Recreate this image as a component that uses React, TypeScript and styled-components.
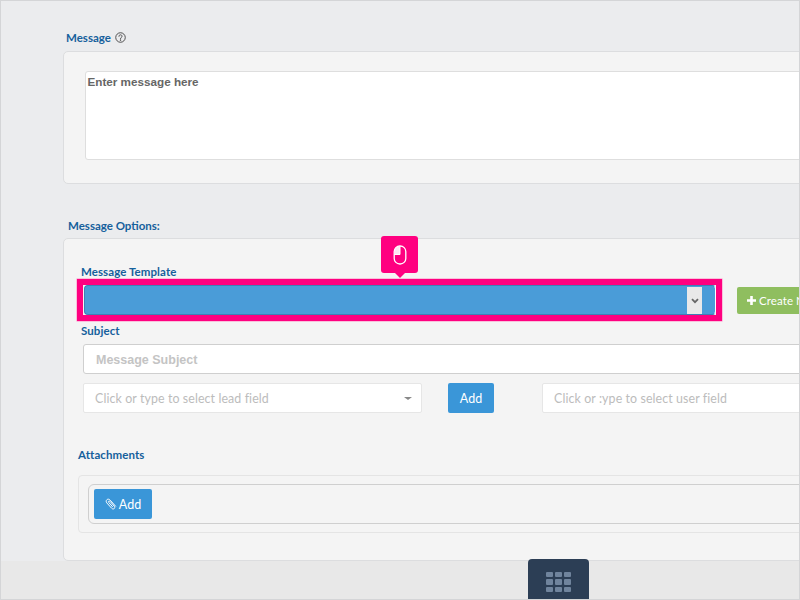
import React from "react";
import styled, { createGlobalStyle } from "styled-components";

const Global = createGlobalStyle`
  html, body { margin: 0; padding: 0; background: #ebecee; }
  body { font-family: "Lato", "Liberation Sans", sans-serif; }
`;

const Page = styled.div`
  position: relative;
  box-sizing: border-box;
  width: 800px;
  height: 600px;
  overflow: hidden;
  background: #ebecee;
  border: 1px solid #d4d5d7;
  display: flex;
  flex-direction: column;
`;

const Main = styled.div`
  width: 1100px;
  height: 560px;
  flex: none;
  box-sizing: border-box;
  padding: 29px 0 0 62px;
`;

const Heading = styled.div<{ $indent?: number }>`
  display: flex;
  align-items: center;
  gap: 4px;
  height: 15px;
  margin-left: ${(p) => p.$indent ?? 3}px;
  font: 700 11.5px/15px "Lato", "Noto Sans", sans-serif;
  color: #15609c;
`;

const Panel = styled.section<{ $h: number; $pad: string; $mt: number }>`
  box-sizing: border-box;
  height: ${(p) => p.$h}px;
  padding: ${(p) => p.$pad};
  margin-top: ${(p) => p.$mt}px;
  background: #f4f4f4;
  border: 1px solid #dcdddf;
  border-radius: 5px;
`;

const TextArea = styled.div`
  box-sizing: border-box;
  width: 900px;
  height: 89px;
  padding: 2px 1.5px;
  background: #fff;
  border: 1px solid #dedede;
  border-radius: 3px;
  font: 700 11.7px/15px "Liberation Sans", sans-serif;
  color: #666;
`;

const Spacer = styled.div<{ $h: number }>`
  height: ${(p) => p.$h}px;
`;

const FieldLabel = styled.div<{ $left: number; $top: number }>`
  height: 14px;
  margin: ${(p) => p.$top}px 0 0 ${(p) => p.$left}px;
  font: 700 11.5px/14px "Lato", "Noto Sans", sans-serif;
  letter-spacing: 0.08px;
  color: #15609c;
`;

const TemplateRow = styled.div`
  display: flex;
  align-items: center;
  gap: 21px;
  height: 30px;
  margin: 0 0 0 20px;
  padding-top: 6px;
`;

const Highlighted = styled.div`
  position: relative;
  flex: none;
  width: 632px;
  height: 30px;
`;

const Select = styled.div`
  box-sizing: border-box;
  width: 632px;
  height: 30px;
  display: flex;
  justify-content: flex-end;
  padding: 1px 13px 0 0;
  background: #4a9cd8;
  border: 1px solid #3e7fb5;
  border-right-color: #fff;
  border-radius: 4px;
`;

const SelectArrow = styled.div`
  width: 15px;
  height: 27px;
  display: flex;
  align-items: center;
  justify-content: center;
  background: #e9e9e9;
`;

const HighlightFrame = styled.div`
  position: absolute;
  left: -7px;
  top: -6px;
  width: 645px;
  height: 42px;
  box-sizing: border-box;
  border: 6px solid #ff0080;
  box-shadow: 0 0 0 0.5px #ff8cc4;
`;

const Tip = styled.div`
  position: absolute;
  left: 297px;
  top: -49px;
  width: 37px;
  height: 37px;
  display: flex;
  align-items: center;
  justify-content: center;
  background: #ff0080;
  border-radius: 3px;
  &::after {
    content: "";
    position: absolute;
    left: 14px;
    bottom: -5px;
    border-left: 5px solid transparent;
    border-right: 5px solid transparent;
    border-top: 5px solid #ff0080;
  }
`;

const GreenButton = styled.div`
  flex: none;
  width: 120px;
  height: 27px;
  box-sizing: border-box;
  padding-left: 10px;
  display: flex;
  align-items: center;
  gap: 3px;
  background: #8fbe5f;
  border-radius: 2px;
  color: #fff;
  font-size: 11.5px;
  letter-spacing: 0.1px;
`;

const SubjectInput = styled.div`
  box-sizing: border-box;
  width: 900px;
  height: 30px;
  margin: 6px 0 0 19px;
  padding: 1px 0 0 12px;
  display: flex;
  align-items: center;
  background: #fff;
  border: 1px solid #cfcfcf;
  border-radius: 3px;
  font: 700 12.5px "Liberation Sans", sans-serif;
  color: #c4c4c4;
`;

const FieldRow = styled.div`
  display: flex;
  align-items: center;
  height: 30px;
  margin: 9px 0 0 19px;
`;

const LookupBox = styled.div<{ $w: number; $before?: number; $after?: number }>`
  flex: none;
  position: relative;
  box-sizing: border-box;
  width: ${(p) => p.$w}px;
  height: 30px;
  margin-left: ${(p) => p.$before ?? 0}px;
  margin-right: ${(p) => p.$after ?? 0}px;
  padding-left: 11px;
  display: flex;
  align-items: center;
  background: #fff;
  border: 1px solid #e6e6e6;
  border-radius: 2px;
  font-size: 12.4px;
  letter-spacing: 0.1px;
  color: #bcbcbc;
`;

const Caret = styled.span`
  position: absolute;
  right: 9px;
  top: 13px;
  border-left: 4px solid transparent;
  border-right: 4px solid transparent;
  border-top: 3px solid #888;
`;

const BlueButton = styled.div<{ $w: number }>`
  flex: none;
  box-sizing: border-box;
  width: ${(p) => p.$w}px;
  height: 30px;
  display: flex;
  align-items: center;
  justify-content: center;
  gap: 2px;
  background: #3a96d8;
  border-radius: 2px;
  color: #fff;
  font-size: 12.5px;
`;

const AttachOuter = styled.div`
  box-sizing: border-box;
  width: 900px;
  height: 58px;
  margin: 13px 0 0 14px;
  padding: 8px 9px;
  border: 1px solid #e4e4e4;
  border-radius: 4px;
`;

const AttachInner = styled.div`
  box-sizing: border-box;
  height: 40px;
  padding: 4px 5px;
  border: 1px solid #cfcfcf;
  border-radius: 6px;
`;

const Footer = styled.div`
  flex: 1;
  background: #e8e8e8;
`;

const Dock = styled.div`
  position: absolute;
  left: 527px;
  top: 558px;
  box-sizing: border-box;
  width: 61px;
  height: 42px;
  padding-top: 13px;
  display: flex;
  justify-content: center;
  background: #2c3e55;
  border-radius: 4px 4px 0 0;
`;

const DockGrid = styled.div`
  display: grid;
  grid-template-columns: repeat(3, 7px);
  grid-auto-rows: 5.4px;
  gap: 2px 2px;
  & > span {
    background: #70849d;
    border-radius: 1px;
  }
`;

const HelpIcon = () => (
  <svg width="11" height="11" viewBox="0 0 12 12" fill="none" stroke="#444" strokeWidth="1">
    <circle cx="6" cy="6" r="5.2" />
    <path d="M4.3 4.7c0-1 .8-1.6 1.7-1.6s1.7.6 1.7 1.5c0 1.3-1.7 1.3-1.7 2.6" strokeLinecap="round" />
    <circle cx="6" cy="8.8" r="0.4" fill="#444" />
  </svg>
);

const Mouse = () => (
  <svg width="14" height="20" viewBox="0 0 14 20" fill="none">
    <path d="M7 1.5h-1a4.5 4.5 0 0 0-4.5 4.5v3.5h5.5z" fill="#fff" opacity="0.9" />
    <rect x="1.2" y="1" width="11.6" height="18" rx="5.6" stroke="#fff" strokeWidth="1.3" />
    <path d="M7 1v8.5H1.2" stroke="#fff" strokeWidth="1" />
  </svg>
);

const Chevron = () => (
  <svg width="8" height="6" viewBox="0 0 8 6" fill="none" stroke="#666" strokeWidth="1.8">
    <path d="M1 1.2l3 3 3-3" />
  </svg>
);

const Plus = () => (
  <svg width="9" height="9" viewBox="0 0 9 9" fill="#fff">
    <path d="M3.2 0h2.6v3.2H9v2.6H5.8V9H3.2V5.8H0V3.2h3.2z" />
  </svg>
);

const Clip = () => (
  <svg width="12" height="12" viewBox="0 0 12 12" fill="none" stroke="#fff" strokeWidth="1" strokeLinecap="round">
    <path d="M10.6 8.2 5.2 2.2C4.2 1 2.8.9 1.9 1.7.9 2.6 1 4 2 5.1l4.6 5.1c.8.9 1.9 1 2.6.4.8-.7.7-1.7-.1-2.6L5 3.4c-.4-.5-1-.5-1.3-.2-.4.3-.3.9.1 1.3l3.7 4.1" />
  </svg>
);

export default function App() {
  return (
    <>
      <Global />
      <Page>
        <Main>
          <Heading>
            Message <HelpIcon />
          </Heading>
          <Panel $h={133} $pad="19px 0 0 21px" $mt={6}>
            <TextArea>Enter message here</TextArea>
          </Panel>
          <Spacer $h={34} />
          <Heading $indent={5}>Message Options:</Heading>
          <Panel $h={323} $pad="0" $mt={5}>
            <FieldLabel $left={17} $top={26}>Message Template</FieldLabel>
            <TemplateRow>
              <Highlighted>
                <Select>
                  <SelectArrow>
                    <Chevron />
                  </SelectArrow>
                </Select>
                <HighlightFrame />
                <Tip>
                  <Mouse />
                </Tip>
              </Highlighted>
              <GreenButton>
                <Plus /> Create New
              </GreenButton>
            </TemplateRow>
            <FieldLabel $left={17} $top={9}>Subject</FieldLabel>
            <SubjectInput>Message Subject</SubjectInput>
            <FieldRow>
              <LookupBox $w={339} $after={26}>
                Click or type to select lead field
                <Caret />
              </LookupBox>
              <BlueButton $w={46}>Add</BlueButton>
              <LookupBox $w={500} $before={48}>
                Click or :ype to select user field
              </LookupBox>
            </FieldRow>
            <FieldLabel $left={14} $top={35}>Attachments</FieldLabel>
            <AttachOuter>
              <AttachInner>
                <BlueButton $w={58}>
                  <Clip /> Add
                </BlueButton>
              </AttachInner>
            </AttachOuter>
          </Panel>
        </Main>
        <Footer />
        <Dock>
          <DockGrid>
            {Array.from({ length: 9 }, (_, i) => (
              <span key={i} />
            ))}
          </DockGrid>
        </Dock>
      </Page>
    </>
  );
}
